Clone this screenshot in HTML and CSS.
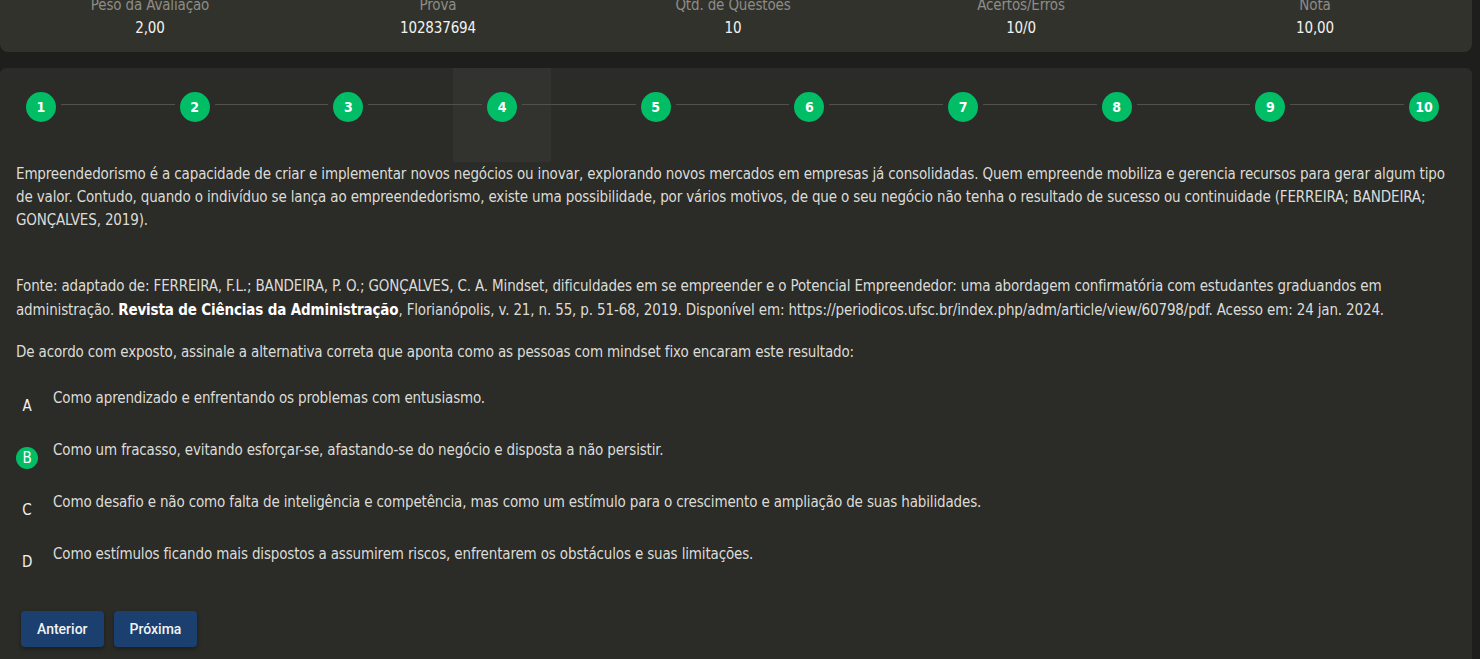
FILE: index.html
```html
<!DOCTYPE html>
<html lang="pt-BR">
<head>
  <meta charset="UTF-8">
  <meta name="viewport" content="width=device-width, initial-scale=1.0">
  <link rel="stylesheet" href="styles.css">
  <title>Avaliação</title>
</head>
<body>
  <div class="page">
    <section class="summary">
      <div class="stat"><span class="stat-label">Peso da Avaliação</span><span class="stat-value">2,00</span></div>
      <div class="stat"><span class="stat-label">Prova</span><span class="stat-value">102837694</span></div>
      <div class="stat"><span class="stat-label">Qtd. de Questões</span><span class="stat-value">10</span></div>
      <div class="stat"><span class="stat-label">Acertos/Erros</span><span class="stat-value">10/0</span></div>
      <div class="stat"><span class="stat-label">Nota</span><span class="stat-value">10,00</span></div>
    </section>

    <section class="quiz">
      <div class="stepper">
        <div class="step"><span class="step-dot">1</span></div>
        <div class="step-line"></div>
        <div class="step"><span class="step-dot">2</span></div>
        <div class="step-line"></div>
        <div class="step"><span class="step-dot">3</span></div>
        <div class="step-line"></div>
        <div class="step current"><span class="step-dot">4</span></div>
        <div class="step-line"></div>
        <div class="step"><span class="step-dot">5</span></div>
        <div class="step-line"></div>
        <div class="step"><span class="step-dot">6</span></div>
        <div class="step-line"></div>
        <div class="step"><span class="step-dot">7</span></div>
        <div class="step-line"></div>
        <div class="step"><span class="step-dot">8</span></div>
        <div class="step-line"></div>
        <div class="step"><span class="step-dot">9</span></div>
        <div class="step-line"></div>
        <div class="step"><span class="step-dot">10</span></div>
      </div>

      <div class="question">
        <p class="intro">Empreendedorismo é a capacidade de criar e implementar novos negócios ou inovar, explorando novos mercados em empresas já consolidadas. Quem empreende mobiliza e gerencia recursos para gerar algum tipo de valor. Contudo, quando o indivíduo se lança ao empreendedorismo, existe uma possibilidade, por vários motivos, de que o seu negócio não tenha o resultado de sucesso ou continuidade (FERREIRA; BANDEIRA; GONÇALVES, 2019).</p>
        <p class="source">Fonte: adaptado de: FERREIRA, F.L.; BANDEIRA, P. O.; GONÇALVES, C. A. Mindset, dificuldades em se empreender e o Potencial Empreendedor: uma abordagem confirmatória com estudantes graduandos em administração. <strong>Revista de Ciências da Administração</strong>, Florianópolis, v. 21, n. 55, p. 51-68, 2019. Disponível em: https://periodicos.ufsc.br/index.php/adm/article/view/60798/pdf. Acesso em: 24 jan. 2024.</p>
        <p class="prompt">De acordo com exposto, assinale a alternativa correta que aponta como as pessoas com mindset fixo encaram este resultado:</p>
      </div>

      <ul class="options">
        <li class="option"><span class="option-key">A</span><span class="option-text">Como aprendizado e enfrentando os problemas com entusiasmo.</span></li>
        <li class="option selected"><span class="option-key">B</span><span class="option-text">Como um fracasso, evitando esforçar-se, afastando-se do negócio e disposta a não persistir.</span></li>
        <li class="option"><span class="option-key">C</span><span class="option-text">Como desafio e não como falta de inteligência e competência, mas como um estímulo para o crescimento e ampliação de suas habilidades.</span></li>
        <li class="option"><span class="option-key">D</span><span class="option-text">Como estímulos ficando mais dispostos a assumirem riscos, enfrentarem os obstáculos e suas limitações.</span></li>
      </ul>

      <div class="nav">
        <button class="nav-btn">Anterior</button>
        <button class="nav-btn">Próxima</button>
      </div>
    </section>
  </div>
</body>
</html>
```

FILE: styles.css
```css
html, body {
  margin: 0;
  padding: 0;
  height: 100%;
  overflow: hidden;
}
body {
  background: #1e1e1c;
  color: #dcdcd8;
  font-family: 'Liberation Sans Narrow', 'DejaVu Sans Condensed', sans-serif;
  font-size: 15px;
  letter-spacing: -0.15px;
}
.page {
  width: 1472px;
}

/* resumo da avaliação */
.summary {
  margin-top: -14px;
  padding: 9px 0 14px 6px;
  background: #32322d;
  border-radius: 0 0 8px 8px;
  display: grid;
  grid-template-columns: 288px 288px 302px 1fr 314px;
}
.stat {
  display: flex;
  flex-direction: column;
  align-items: center;
  gap: 3px;
}
.stat-label {
  color: #8d8d87;
  line-height: 20px;
}
.stat-value {
  color: #f2f2f0;
  line-height: 20px;
}

/* card da questão */
.quiz {
  position: relative;
  z-index: 0;
  margin-top: 16px;
  min-height: 620px;
  background: #2b2b27;
  border-radius: 6px 6px 0 0;
}
.stepper {
  display: flex;
  align-items: flex-start;
  height: 94px;
  padding: 24px 33px 0 26px;
  box-sizing: border-box;
}
.step {
  position: relative;
}
.step.current::before {
  content: '';
  position: absolute;
  left: -34px;
  right: -34px;
  top: -24px;
  bottom: -40px;
  background: #32322e;
  z-index: -1;
}
.step-dot {
  width: 30px;
  height: 30px;
  border-radius: 50%;
  background: #00bd66;
  color: #fff;
  font-weight: bold;
  font-size: 14px;
  letter-spacing: 0;
  display: flex;
  align-items: center;
  justify-content: center;
}
.step-line {
  flex: 1;
  height: 1px;
  margin: 12px 5px 0;
  background: #52524c;
}

.question {
  padding: 1px 16px 0;
}
.question p {
  margin: 0;
  line-height: 23px;
}
.question .intro {
  margin-bottom: 42px;
}
.question .source {
  line-height: 24px;
  margin-bottom: 19px;
}
.question strong {
  color: #fff;
}

.options {
  list-style: none;
  margin: 24px 0 0;
  padding: 0 16px;
}
.option {
  display: flex;
  align-items: flex-start;
  gap: 15px;
  margin-bottom: 23px;
}
.option-key {
  width: 22px;
  height: 22px;
  margin-top: 7px;
  border-radius: 50%;
  display: flex;
  align-items: center;
  justify-content: center;
  color: #f2f2f0;
  flex-shrink: 0;
}
.option.selected .option-key {
  background: #00bd66;
  color: #fff;
}
.option-text {
  line-height: 20px;
}

.nav {
  display: flex;
  gap: 10px;
  padding: 15px 21px;
}
.nav-btn {
  height: 36px;
  padding: 0 16px;
  background: #1b3f6e;
  color: #f2f2f2;
  border: none;
  border-radius: 4px;
  font-family: Roboto, sans-serif;
  font-weight: 500;
  font-size: 14px;
  letter-spacing: 0;
  box-shadow: 0 2px 4px rgba(0,0,0,0.35);
  cursor: pointer;
}
```
